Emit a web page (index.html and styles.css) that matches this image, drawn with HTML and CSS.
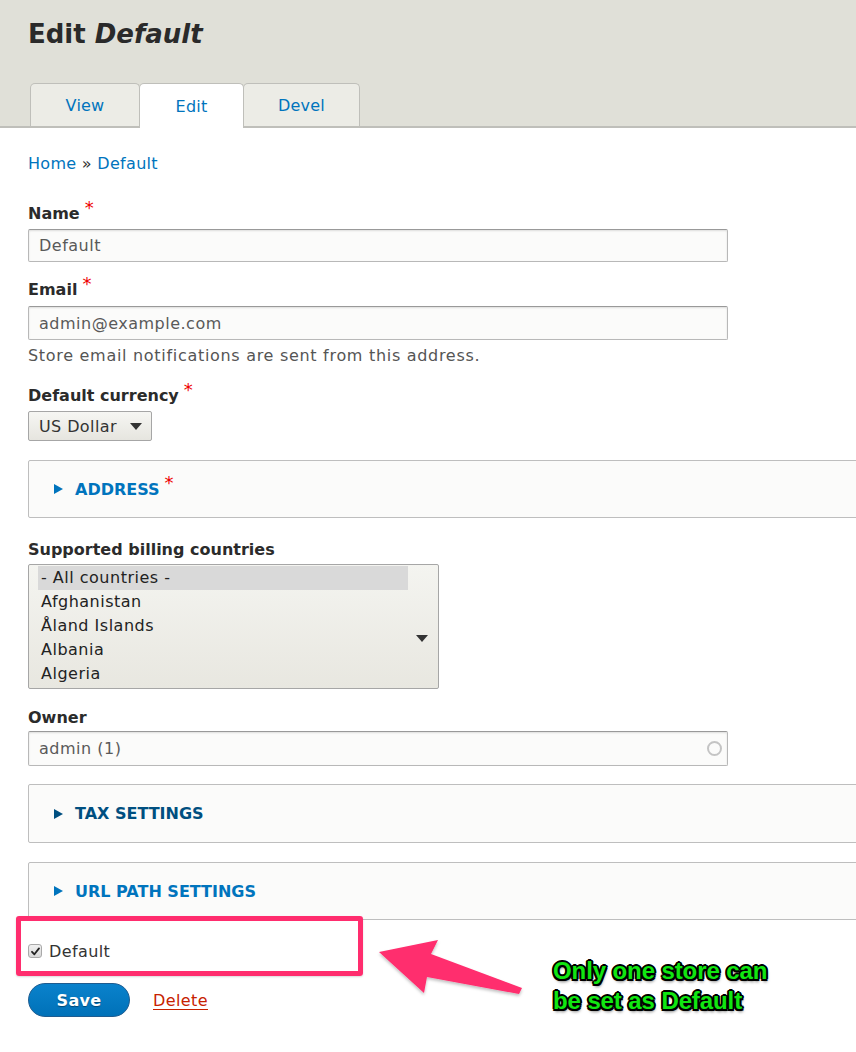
FILE: index.html
```html
<!DOCTYPE html>
<html lang="en">
<head>
<meta charset="utf-8">
<title>Edit Default</title>
<link rel="stylesheet" href="styles.css">
</head>
<body>
<div class="page">
  <header class="header">
    <h1 class="title">Edit <em>Default</em></h1>
    <nav class="tabs">
      <a class="tab tab-view">View</a>
      <a class="tab tab-edit active">Edit</a>
      <a class="tab tab-devel">Devel</a>
    </nav>
  </header>

  <main class="content">
    <div class="breadcrumb"><a class="link">Home</a> » <a class="link">Default</a></div>

    <div class="field f-name">
      <div class="label">Name<span class="req">*</span></div>
      <div class="input">Default</div>
    </div>

    <div class="field f-email">
      <div class="label">Email<span class="req">*</span></div>
      <div class="input">admin@example.com</div>
      <div class="desc">Store email notifications are sent from this address.</div>
    </div>

    <div class="field f-currency">
      <div class="label">Default currency<span class="req">*</span></div>
      <div class="select">US Dollar<span class="caret"></span></div>
    </div>

    <div class="details d-address">
      <div class="summary"><span class="tri"></span>ADDRESS<span class="req req-sum">*</span></div>
    </div>

    <div class="field f-countries">
      <div class="label">Supported billing countries</div>
      <div class="multi">
        <div class="options">
          <div class="opt selected">- All countries -</div>
          <div class="opt">Afghanistan</div>
          <div class="opt">Åland Islands</div>
          <div class="opt">Albania</div>
          <div class="opt">Algeria</div>
        </div>
        <span class="caret multi-caret"></span>
      </div>
    </div>

    <div class="field f-owner">
      <div class="label">Owner</div>
      <div class="input input-auto">admin (1)<span class="throbber"></span></div>
    </div>

    <div class="details d-tax">
      <div class="summary dark"><span class="tri"></span>TAX SETTINGS</div>
    </div>

    <div class="details d-url">
      <div class="summary"><span class="tri"></span>URL PATH SETTINGS</div>
    </div>

    <div class="check-row">
      <span class="checkbox"><svg width="9" height="9" viewBox="0 0 9 9"><path d="M1 4.8 L3.4 7.3 L8 1.4" fill="none" stroke="#222" stroke-width="1.8" stroke-linecap="round" stroke-linejoin="round"/></svg></span>
      <span class="check-label">Default</span>
    </div>

    <div class="actions">
      <button class="btn-save" type="button">Save</button>
      <a class="delete">Delete</a>
    </div>
  </main>

  <div class="highlight-box"></div>
  <svg class="callout-arrow" width="160" height="70" viewBox="370 935 160 70">
    <defs>
      <filter id="sh" x="-20%" y="-20%" width="140%" height="160%">
        <feDropShadow dx="0" dy="2" stdDeviation="1.5" flood-color="#000" flood-opacity="0.25"/>
      </filter>
    </defs>
    <polygon points="379,952 438,940 431,954 522,988 519,994 427,977 424,993" fill="#ff2d6e" filter="url(#sh)"/>
  </svg>
  <div class="callout-text">Only one store can<br>be set as Default</div>
</div>
</body>
</html>
```

FILE: styles.css
```css
* { box-sizing: border-box; }

html, body {
  margin: 0;
  padding: 0;
  background: #fff;
}

body {
  font-family: "DejaVu Sans", "Noto Sans", sans-serif;
  font-size: 16px;
  color: #333;
}

.page {
  position: relative;
  width: 856px;
  min-height: 1052px;
  overflow: hidden;
}

/* Header */
.header {
  background: #e0e0d8;
  border-bottom: 2px solid #bfbfba;
  padding: 18px 0 0 28px;
  height: 128px;
  display: flex;
  flex-direction: column;
}

.title {
  margin: 0;
  font-size: 26px;
  line-height: 32px;
  font-weight: bold;
  color: #2a2a2a;
}

.title em {
  font-style: oblique;
}

.tabs {
  display: flex;
  align-items: flex-end;
  margin-top: auto;
  padding-left: 2px;
}

.tab {
  display: flex;
  align-items: center;
  justify-content: center;
  height: 43px;
  color: #0074bd;
  background: #ecece6;
  border: 1px solid #bfbfba;
  border-bottom: none;
  border-radius: 5px 5px 0 0;
  font-size: 16px;
  letter-spacing: 0.2px;
}

.tab + .tab { margin-left: -1px; }

.tab-view { width: 110px; }
.tab-edit { width: 105px; }
.tab-devel { width: 117px; }

.tab.active {
  background: #fff;
  height: 45px;
  margin-bottom: -2px;
  position: relative;
  z-index: 1;
}

/* Content */
.content {
  padding: 0 28px;
}

.link { color: #0074bd; text-decoration: none; }

.breadcrumb {
  margin-top: 26px;
  line-height: 20px;
  color: #333;
  letter-spacing: 0.3px;
}

.field { margin-top: 20px; }

.label {
  font-weight: bold;
  line-height: 20px;
  color: #2b2b2b;
}

.req {
  color: #e00;
  font-weight: normal;
  font-size: 18px;
  line-height: 0;
  margin-left: 5px;
  vertical-align: 5px;
}

.f-name { margin-top: 30px; }
.f-email { margin-top: 18px; }
.f-currency { margin-top: 20px; }
.f-countries { margin-top: 22px; }
.f-owner { margin-top: 19px; }

.input {
  width: 700px;
  height: 33px;
  margin-top: 5px;
  display: flex;
  align-items: center;
  padding-left: 10px;
  background: #fbfbfa;
  border: 1px solid #b8b8b8;
  border-top-color: #999;
  border-radius: 2px;
  box-shadow: inset 0 1px 2px rgba(0, 0, 0, 0.12);
  color: #595959;
  letter-spacing: 0.5px;
}

.f-email .input { height: 34px; margin-top: 6px; }

.input-auto {
  height: 35px;
  margin-top: 3px;
  justify-content: space-between;
  padding-right: 5px;
}

.throbber {
  width: 15px;
  height: 15px;
  border: 2px solid #c4c4c4;
  border-radius: 50%;
}

.desc {
  margin-top: 6px;
  line-height: 20px;
  color: #555;
  letter-spacing: 0.7px;
}

.select {
  width: 124px;
  height: 30px;
  margin-top: 5px;
  display: flex;
  align-items: center;
  justify-content: space-between;
  padding: 0 9px 0 10px;
  background: linear-gradient(#f6f6f3, #e6e5df);
  border: 1px solid #a6a6a6;
  border-radius: 2px;
  color: #333;
  letter-spacing: 0.4px;
}

.caret {
  width: 0;
  height: 0;
  border-left: 6px solid transparent;
  border-right: 6px solid transparent;
  border-top: 7px solid #333;
}

/* Details / fieldsets */
.details {
  margin-top: 20px;
  margin-right: -60px;
  background: #fbfbfa;
  border: 1px solid #bebebe;
  border-radius: 2px;
}

.summary {
  display: flex;
  align-items: center;
  height: 56px;
  padding-left: 25px;
  font-weight: bold;
  color: #0074bd;
}

.summary.dark { color: #004f80; }

.d-address { margin-top: 19px; }
.d-tax { margin-top: 18px; }
.d-url { margin-top: 19px; }
.d-tax .summary { height: 57px; }

.tri {
  width: 0;
  height: 0;
  border-top: 5px solid transparent;
  border-bottom: 5px solid transparent;
  border-left: 9px solid currentColor;
  margin-right: 12px;
}

.req-sum {
  margin-left: 5px;
  vertical-align: 0;
  align-self: flex-start;
  margin-top: 22px;
}

/* Multi select */
.multi {
  width: 411px;
  height: 125px;
  margin-top: 4px;
  display: flex;
  align-items: center;
  background: linear-gradient(#f4f4f0, #e8e7e0);
  border: 1px solid #a6a6a6;
  border-radius: 2px;
  padding: 1px 10px 0 9px;
  overflow: hidden;
}

.options {
  align-self: flex-start;
  width: 370px;
}

.opt {
  height: 24px;
  line-height: 24px;
  padding-left: 3px;
  color: #222;
  letter-spacing: 0.5px;
}

.opt.selected { background: #d9d9d9; }

.multi-caret {
  margin-left: auto;
  margin-top: 22px;
}

/* Checkbox + actions */
.check-row {
  margin-top: 21px;
  display: flex;
  align-items: center;
  height: 20px;
}

.checkbox {
  width: 14px;
  height: 14px;
  border: 1px solid #a9a9a9;
  border-radius: 3px;
  background: linear-gradient(#f0f0f0, #d8d8d8);
  display: flex;
  align-items: center;
  justify-content: center;
  margin-right: 7px;
}

.check-label { color: #333; letter-spacing: 0.4px; }

.actions {
  margin-top: 22px;
  display: flex;
  align-items: center;
}

.btn-save {
  width: 102px;
  height: 34px;
  border-radius: 18px;
  border: 1px solid #1e5c90;
  background: linear-gradient(#0a82cc, #0071b8);
  color: #fff;
  font-family: "DejaVu Sans", sans-serif;
  font-weight: bold;
  font-size: 16px;
  letter-spacing: 0.3px;
  text-shadow: 0 1px 1px rgba(0, 0, 0, 0.4);
  padding: 0;
}

.delete {
  margin-left: 23px;
  color: #c72100;
  text-decoration: underline;
  text-underline-offset: 3px;
  letter-spacing: 0.4px;
}

/* Annotations (overlay) */
.highlight-box {
  position: absolute;
  left: 16px;
  top: 916px;
  width: 347px;
  height: 60px;
  border: 5px solid #ff2d6e;
  border-radius: 3px;
  box-shadow: 0 1px 2px rgba(0, 0, 0, 0.15);
}

.callout-arrow {
  position: absolute;
  left: 370px;
  top: 935px;
}

.callout-text {
  position: absolute;
  left: 553px;
  top: 956px;
  font-family: "Liberation Sans", Arial, sans-serif;
  font-weight: bold;
  font-size: 24px;
  line-height: 30px;
  letter-spacing: -0.1px;
  color: #11e611;
  text-shadow:
    -1.5px -1.5px 0 #000, 1.5px -1.5px 0 #000, -1.5px 1.5px 0 #000, 1.5px 1.5px 0 #000,
    0 -2px 0 #000, 0 2px 0 #000, -2px 0 0 #000, 2px 0 0 #000,
    1px 3px 3px rgba(0, 0, 0, 0.5);
}
```
